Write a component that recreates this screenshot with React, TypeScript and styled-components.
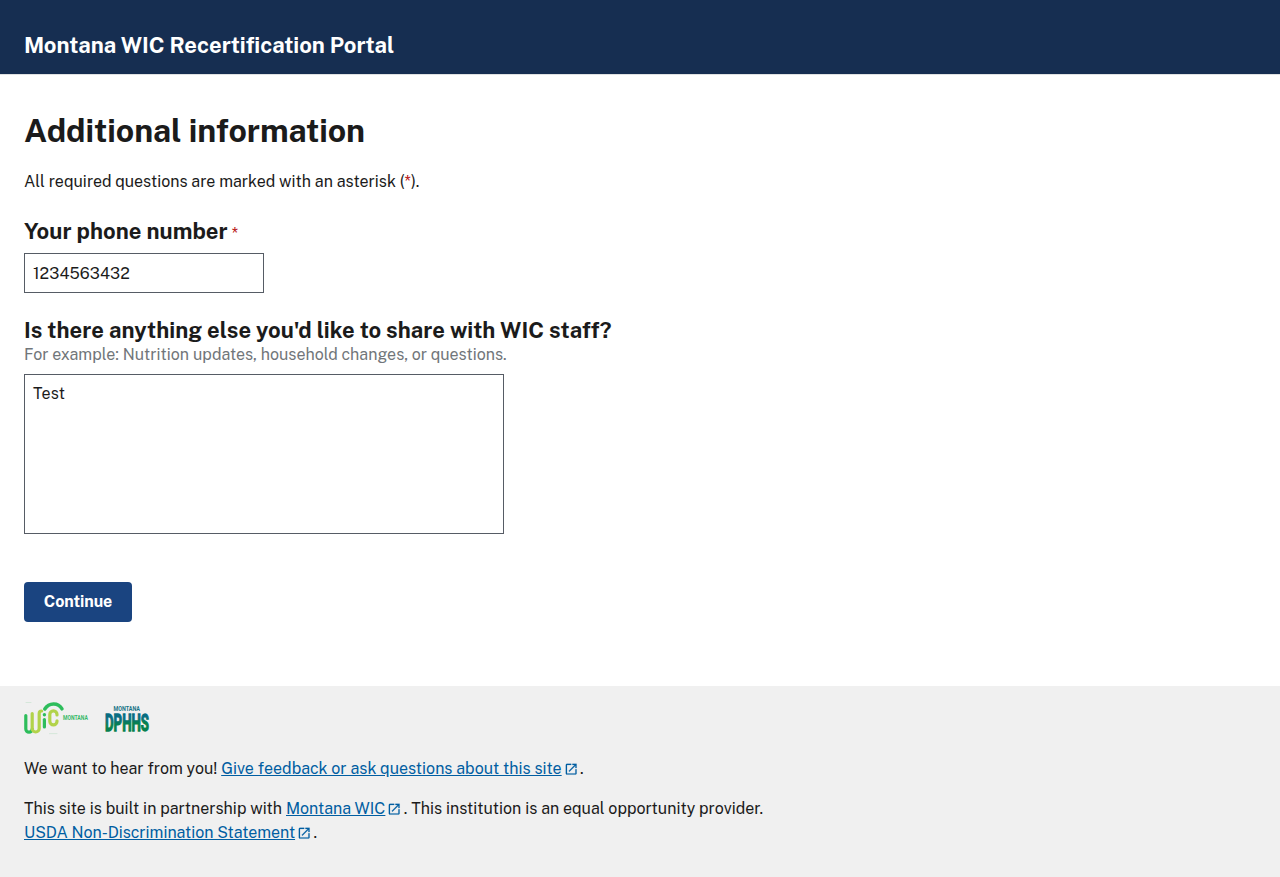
import React from "react";
import styled, { createGlobalStyle } from "styled-components";

const GlobalStyle = createGlobalStyle`
  *, *::before, *::after { box-sizing: border-box; }
  body {
    margin: 0;
    background: #fff;
    color: #1b1b1b;
    font-family: "Public Sans", Inter, "Liberation Sans", sans-serif;
    font-size: 16px;
    line-height: 24px;
  }
`;

const Page = styled.div`
  display: flex;
  flex-direction: column;
  min-height: 100vh;
`;

const Header = styled.header`
  height: 75px;
  padding: 32px 24px 0;
  background: #162e51;
  border-bottom: 1px solid #dfe1e2;
`;

const SiteTitle = styled.div`
  color: #fff;
  font-size: 22px;
  font-weight: 700;
  line-height: 26px;
  letter-spacing: -0.015px;
`;

const Main = styled.main`
  flex: 1;
  padding: 36px 24px 64px;
`;

const Heading = styled.h1`
  margin: 0 0 19px;
  font-size: 32px;
  font-weight: 700;
  line-height: 40px;
  letter-spacing: -0.06px;
`;

const Copy = styled.p<{ $gap?: number; $tracking?: number }>`
  margin: 0 0 ${(p) => p.$gap ?? 0}px;
  letter-spacing: ${(p) => p.$tracking ?? 0}px;
`;

const Label = styled.label`
  display: block;
  font-size: 22px;
  font-weight: 700;
  line-height: 24px;
  letter-spacing: 0.035px;
`;

const Required = styled.span`
  color: #b50909;
  font-size: 16px;
  font-weight: 400;
  line-height: 1;

  ${Label} & {
    margin-left: -1px;
  }
`;

const Hint = styled.div`
  margin-top: 1px;
  color: #71767a;
  letter-spacing: 0.01px;
`;

const Input = styled.input`
  display: block;
  width: 240px;
  height: 40px;
  margin: 10px 0 25px;
  padding: 8px;
  border: 1px solid #565c65;
  border-radius: 0;
  color: #1b1b1b;
  font: inherit;
  letter-spacing: 0.1px;
`;

const TextArea = styled.textarea`
  display: block;
  width: 480px;
  height: 160px;
  margin: 7px 0 48px;
  padding: 7px 8px;
  border: 1px solid #565c65;
  border-radius: 0;
  color: #1b1b1b;
  font: inherit;
  letter-spacing: 0.15px;
  resize: none;
`;

const Button = styled.button`
  display: block;
  width: 108px;
  height: 40px;
  padding: 0;
  border: 0;
  border-radius: 4px;
  background: #1a4480;
  color: #fff;
  font: inherit;
  font-weight: 700;
  letter-spacing: -0.08px;
`;

const Footer = styled.footer`
  padding: 16px 24px 32px;
  background: #f0f0f0;
`;

const Logos = styled.div`
  display: flex;
  gap: 16px;
  height: 32px;
  margin-bottom: 23px;
`;

const LogoSvg = styled.svg`
  height: 32px;
  overflow: visible;
`;

const LogoText = styled.text`
  font-family: "Roboto", "Liberation Sans", sans-serif;
  font-weight: 700;
`;

const Link = styled.a<{ $tracking?: number }>`
  color: #005ea2;
  letter-spacing: ${(p) => p.$tracking ?? 0}px;
  text-decoration: underline;
`;

const LaunchSvg = styled.svg`
  width: 14.4px;
  height: 14.4px;
  margin: 0 2px;
  fill: #005ea2;
  stroke: #005ea2;
  stroke-width: 0.3;
  vertical-align: -2.7px;
`;

const External = ({ children, tracking }: { children: React.ReactNode; tracking?: number }) => (
  <>
    <Link href="#" $tracking={tracking}>{children}</Link>
    <LaunchSvg viewBox="0 0 24 24">
      <path d="M19 19H5V5h7V3H5a2 2 0 0 0-2 2v14a2 2 0 0 0 2 2h14c1.100 0 2-.9 2-2v-7h-2v7zM14 3v2h3.590l-9.830 9.830 1.410 1.410L19 6.410V10h2V3h-7z" />
    </LaunchSvg>
  </>
);

const WicLogo = () => (
  <LogoSvg width="64" viewBox="0 0 64 32" fill="none" strokeWidth="3.2" strokeLinecap="round">
    <path d="M2 .5h5M25.500 31.600h7.500" stroke="#c3e0cb" strokeWidth=".6" />
    <path d="M1.800 13.500V27a3.200 3.200 0 0 0 6.400 0" stroke="#2dbd5b" />
    <path d="M8.200 11.500V26.500a3.500 3.500 0 0 0 7 0V11.500c0-1.600 1-2.500 2.400-2.500" stroke="#b2d34a" />
    <path d="M20.400 17.500V25" stroke="#2dbd5b" />
    <circle cx="20.400" cy="12.800" r="1.700" fill="#2dbd5b" />
    <path d="M20.800 7C25 .6 34 .2 38 6.800" stroke="#2dbd5b" strokeWidth="3.500" />
    <path d="M33 13v-.5a3.600 3.600 0 0 0-7.200 0v6.800a3.600 3.600 0 0 0 7.200 0v-.5" stroke="#b2d34a" />
    <LogoText x="39" y="17.500" fontSize="7" textLength="24.800" lengthAdjust="spacingAndGlyphs" fill="#37b968">MONTANA</LogoText>
  </LogoSvg>
);

const DphhsLogo = () => (
  <LogoSvg width="46" viewBox="0 0 46 32">
    <defs>
      <linearGradient id="dphhs" x1="0" y1="0" x2=".12" y2="1">
        <stop offset=".42" stopColor="#086d82" />
        <stop offset=".62" stopColor="#07804f" />
      </linearGradient>
    </defs>
    <LogoText x="9.500" y="8.900" fontSize="6.800" textLength="26.500" lengthAdjust="spacingAndGlyphs" fill="#197588">MONTANA</LogoText>
    <LogoText x="1" y="28.700" fontSize="24.500" textLength="44" lengthAdjust="spacingAndGlyphs" fill="url(#dphhs)" stroke="url(#dphhs)" strokeWidth="1.300">DPHHS</LogoText>
  </LogoSvg>
);

export default function App() {
  return (
    <Page>
      <GlobalStyle />
      <Header>
        <SiteTitle>Montana WIC Recertification Portal</SiteTitle>
      </Header>
      <Main>
        <Heading>Additional information</Heading>
        <Copy $gap={25}>
          All required questions are marked with an asterisk (<Required>*</Required>).
        </Copy>
        <Label>Your phone number <Required>*</Required></Label>
        <Input defaultValue="1234563432" />
        <Label>Is there anything else you'd like to share with WIC staff?</Label>
        <Hint>For example: Nutrition updates, household changes, or questions.</Hint>
        <TextArea defaultValue="Test" />
        <Button>Continue</Button>
      </Main>
      <Footer>
        <Logos>
          <WicLogo />
          <DphhsLogo />
        </Logos>
        <Copy $gap={16}>
          We want to hear from you! <External tracking={0.01}>Give feedback or ask questions about this site</External>.
        </Copy>
        <Copy $tracking={0.018}>
          This site is built in partnership with <External>Montana WIC</External>. This institution is an equal opportunity provider.
          <br />
          <External tracking={-0.035}>USDA Non-Discrimination Statement</External>.
        </Copy>
      </Footer>
    </Page>
  );
}
